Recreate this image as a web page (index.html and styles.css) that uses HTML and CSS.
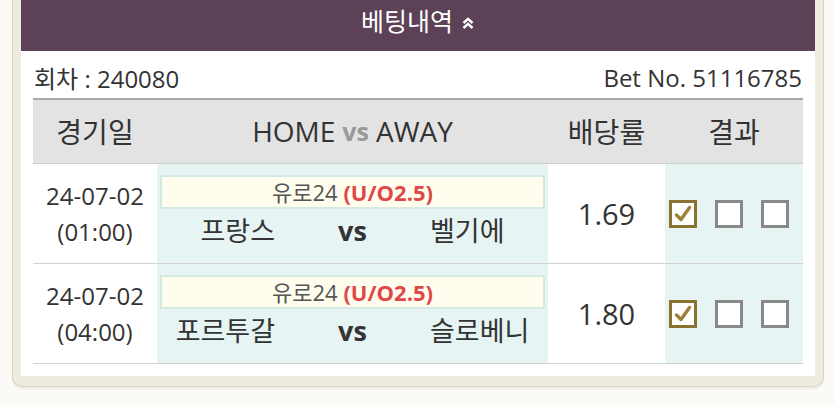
FILE: index.html
```html
<!DOCTYPE html>
<html lang="ko">
<head>
<meta charset="utf-8">
<title>베팅내역</title>
<link rel="stylesheet" href="styles.css">
</head>
<body>
<div class="frame">
  <div class="panel">
    <div class="titlebar">
      <span class="title">베팅내역</span>
      <svg class="dbl" width="14" height="14" viewBox="0 0 14 14" aria-hidden="true">
        <path d="M2.5 7 L7 2.8 L11.5 7 M2.5 12 L7 7.8 L11.5 12" fill="none" stroke="#fff" stroke-width="2.4"/>
      </svg>
    </div>
    <div class="info">
      <span>회차 : 240080</span>
      <span>Bet No. 51116785</span>
    </div>
    <div class="table">
      <div class="thead">
        <div class="th">경기일</div>
        <div class="th">HOME <b class="hvs">vs</b> AWAY</div>
        <div class="th">배당률</div>
        <div class="th">결과</div>
      </div>
      <div class="row">
        <div class="cell date">24-07-02<br>(01:00)</div>
        <div class="cell match">
          <div class="league">유로24 <b class="type">(U/O2.5)</b></div>
          <div class="teams">
            <span class="home">프랑스</span>
            <span class="vs">vs</span>
            <span class="away">벨기에</span>
          </div>
        </div>
        <div class="cell odds">1.69</div>
        <div class="cell result">
          <span class="box checked"><svg viewBox="0 0 22 22" width="22" height="22"><path d="M4.5 12 L9 16.5 L17.5 4.5" fill="none" stroke="#9c8136" stroke-width="3.4" stroke-linecap="round" stroke-linejoin="round"/></svg></span>
          <span class="box"></span>
          <span class="box"></span>
        </div>
      </div>
      <div class="row">
        <div class="cell date">24-07-02<br>(04:00)</div>
        <div class="cell match">
          <div class="league">유로24 <b class="type">(U/O2.5)</b></div>
          <div class="teams">
            <span class="home">포르투갈</span>
            <span class="vs">vs</span>
            <span class="away">슬로베니</span>
          </div>
        </div>
        <div class="cell odds">1.80</div>
        <div class="cell result">
          <span class="box checked"><svg viewBox="0 0 22 22" width="22" height="22"><path d="M4.5 12 L9 16.5 L17.5 4.5" fill="none" stroke="#9c8136" stroke-width="3.4" stroke-linecap="round" stroke-linejoin="round"/></svg></span>
          <span class="box"></span>
          <span class="box"></span>
        </div>
      </div>
    </div>
  </div>
</div>
</body>
</html>
```
FILE: styles.css
```css
* { box-sizing: border-box; }
html, body { margin: 0; padding: 0; }
body {
  background: #fbfaf6;
  font-family: "Open Sans", "Noto Sans CJK KR", sans-serif;
  color: #333;
  width: 835px;
  height: 405px;
  overflow: hidden;
}
.frame {
  margin: 0 11px 0 12px;
  background: #eeebdf;
  border: 1px solid #d9d5c5;
  border-top: none;
  border-radius: 0 0 10px 10px;
  padding: 0 8px 10px;
  box-shadow: 0 2px 2px rgba(0,0,0,0.06);
}
.panel {
  background: #fff;
  padding: 0 12px 12px;
}
.titlebar {
  margin: 0 -12px;
  height: 51px;
  background: #5d4156;
  color: #fff;
  display: flex;
  align-items: center;
  justify-content: center;
  gap: 8px;
  padding-bottom: 12px;
}
.title {
  font-size: 25px;
  font-family: "Noto Sans CJK KR", sans-serif;
}
.dbl { margin-top: 6px; }
.info {
  height: 47px;
  display: flex;
  justify-content: space-between;
  align-items: center;
  font-size: 24px;
  padding: 6px 1px 0;
  color: #333;
}
.table { width: 770px; }
.thead, .row {
  display: grid;
  grid-template-columns: 124px 391px 117px 138px;
}
.thead {
  background: #e3e3e3;
  border-top: 2px solid #a8a8a8;
  height: 66px;
  border-bottom: 1px solid #cfcfcf;
}
.th {
  display: flex;
  align-items: center;
  justify-content: center;
  font-size: 28px;
  color: #333;
  padding-bottom: 2px;
}
.hvs { color: #999; font-weight: 700; margin: 0 7px; font-size: 25px; }
.row {
  height: 100px;
  border-bottom: 1px solid #d2d2d2;
}
.cell {
  display: flex;
  align-items: center;
  justify-content: center;
}
.date {
  flex-direction: column;
  text-align: center;
  font-size: 24px;
  line-height: 36px;
  background: #fff;
}
.match {
  background: #e6f4f4;
  flex-direction: column;
  justify-content: flex-start;
  align-items: stretch;
  padding: 11px 3px 0 3px;
}
.league {
  height: 34px;
  border: 2px solid #d4e8e4;
  background: #fffdee;
  text-align: center;
  font-size: 22px;
  line-height: 30px;
  color: #555;
}
.type { color: #e04848; font-weight: 700; }
.teams {
  display: grid;
  grid-template-columns: 1fr 155px 1fr;
  align-items: baseline;
  font-size: 27px;
  margin-top: 1px;
  line-height: 40px;
}
.home { text-align: right; font-family: "Noto Sans CJK KR", sans-serif; }
.away { text-align: left; font-family: "Noto Sans CJK KR", sans-serif; }
.vs { text-align: center; font-weight: 700; font-size: 27px; color: #333; }
.odds {
  background: #fff;
  font-size: 29px;
}
.result {
  background: #e6f4f4;
  gap: 18px;
  padding-right: 11px;
}
.box {
  width: 28px;
  height: 28px;
  border: 3px solid #898989;
  background: #fff;
  display: flex;
  align-items: center;
  justify-content: center;
}
.box.checked { border-color: #8a7330; }
```
